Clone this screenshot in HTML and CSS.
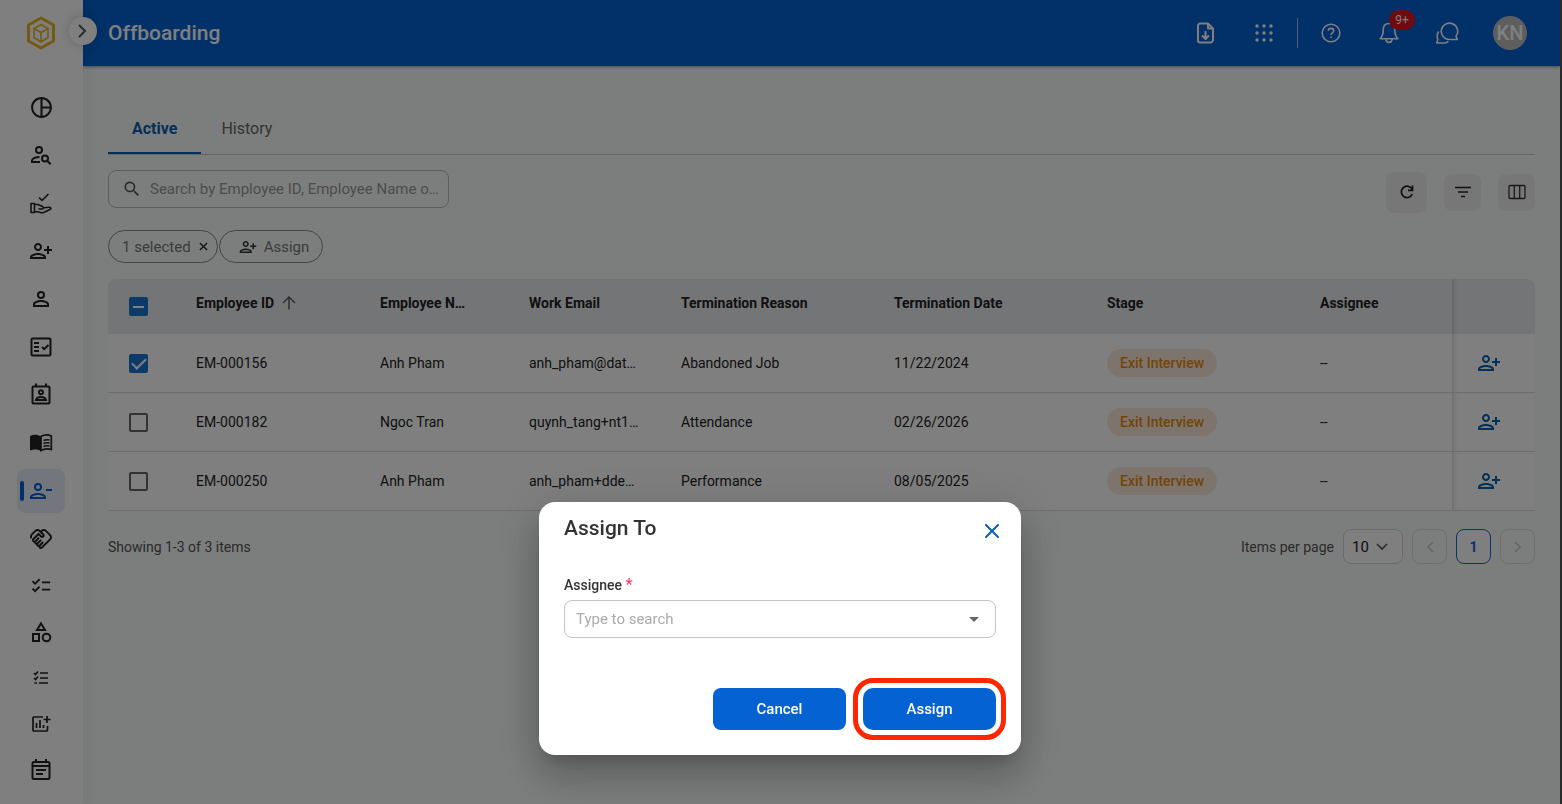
FILE: index.html
```html
<!DOCTYPE html>
<html lang="en">
<head>
<meta charset="utf-8">
<meta name="viewport" content="width=device-width, initial-scale=1">
<title>Offboarding</title>
<link rel="stylesheet" href="styles.css">
</head>
<body>
<svg class="sprite" aria-hidden="true">
  <symbol id="person-add" viewBox="0 0 24 24"><path d="M13 8c0-2.210-1.790-4-4-4S5 5.790 5 8s1.790 4 4 4 4-1.790 4-4zm-2 0c0 1.100-.9 2-2 2s-2-.9-2-2 .9-2 2-2 2 .9 2 2zM1 18v2h16v-2c0-2.660-5.330-4-8-4s-8 1.340-8 4zm2 0c.2-.71 3.300-2 6-2 2.690 0 5.770 1.280 6 2H3zM20 15v-3h3v-2h-3V7h-2v3h-3v2h3v3h2z"/></symbol>
</svg>
<div class="app">
  <aside class="sidebar">
    <a class="logo" href="#" aria-label="Home">
      <svg width="30" height="34" viewBox="0 0 30 34" fill="none" stroke="#e9b520" stroke-linejoin="round"><path stroke-width="3" d="M15 2 27.500 9v16L15 32 2.500 25V9z"/><path stroke-width="1.600" d="M15 8.500 22 12.500v9L15 26l-7-4.500v-9zM8 12.500l7 4 7-4M15 16.500V26"/></svg>
    </a>
    <button class="toggle" aria-label="Expand menu"><svg width="18" height="18" viewBox="0 0 18 18" fill="none" stroke="#555" stroke-width="2"><path d="m5 3 6 6-6 6"/></svg></button>
    <nav class="nav">
      <a href="#" aria-label="Dashboard"><svg width="25" height="25" viewBox="0 0 24 24"><path d="M12 2C6.480 2 2 6.480 2 12s4.480 10 10 10 10-4.480 10-10S17.520 2 12 2zm1 2.070c3.610.45 6.480 3.330 6.930 6.930H13V4.070zM4 12c0-4.060 3.070-7.440 7-7.930v15.870c-3.930-.5-7-3.880-7-7.940zm9 7.930V13h6.930c-.45 3.610-3.320 6.480-6.930 6.930z"/></svg></a>
      <a href="#" aria-label="Find people"><svg width="24" height="24" viewBox="0 0 24 24" fill="none" stroke="#222" stroke-width="2"><circle cx="10" cy="7" r="3"/><path d="M10.500 14C7.500 14 3 15.300 3 17.500V19h8"/><circle cx="16" cy="15.500" r="3"/><path d="m18.200 17.700 3.500 3.500"/></svg></a>
      <a href="#" aria-label="Approvals"><svg width="24" height="24" viewBox="0 0 24 24" fill="none" stroke="#222" stroke-width="1.600" stroke-linejoin="round"><path d="m10 6.500 3 3 6.500-6.500M2 12.500h3.500v9H2zM5.500 13.500h3.500l4.500 2c1.500.7 1 2.500-.5 2.500H9.500m4-1 6-.7c2.500-.3 3 1.500 1.500 2.200L14.500 21.500c-1 .4-2 .3-3 0l-3-.8h-3"/></svg></a>
      <a href="#" aria-label="Onboarding"><svg width="24" height="24"><use href="#person-add"/></svg></a>
      <a href="#" aria-label="Employees"><svg width="24" height="24" viewBox="0 0 24 24"><path fill-rule="evenodd" d="M12 4a4 4 0 1 0 0 8 4 4 0 0 0 0-8zm0 2a2 2 0 1 1 0 4 2 2 0 0 1 0-4zM12 13c-2.670 0-8 1.340-8 4v3h16v-3c0-2.660-5.330-4-8-4zm0 2c2.700 0 5.800 1.290 6 2v1H6v-1c.2-.7 3.300-2 6-2z"/></svg></a>
      <a href="#" aria-label="Checks"><svg width="24" height="24" viewBox="0 0 24 24" fill="none" stroke="#222" stroke-width="2"><rect x="2.500" y="3.500" width="19" height="17" rx="1"/><path d="M5 8h5M5 12h5M5 16h5m3-4 2.200 2.200L19.500 10"/></svg></a>
      <a href="#" aria-label="Contacts"><svg width="24" height="24" viewBox="0 0 24 24" fill="none" stroke="#222" stroke-width="2"><rect x="3.500" y="3.500" width="17" height="17" rx="1"/><path d="M7 .5V4m10-3.500V4"/><circle cx="12" cy="9.300" r="2"/><path d="M7 17c.6-2.300 3-3 5-3s4.400.7 5 3z"/></svg></a>
      <a href="#" aria-label="Handbook"><svg width="24" height="24" viewBox="0 0 24 24"><path d="M1 5c3.500-1.800 8-1.500 11 .5V20c-3-2-7.500-2-11-.5z"/><path fill="none" stroke="#222" stroke-width="1.700" d="M12 5.500C15 3.700 19 3.500 22.300 5v13.500c-3.500-1-7.300-.8-10.300 1zM14.500 9.500c2-.8 4-.9 6-.5m-6 3.500c2-.8 4-.9 6-.5m-6 3.500c2-.8 4-.9 6-.5"/></svg></a>
      <a href="#" class="current" aria-label="Offboarding" aria-current="page"><svg width="24" height="24" viewBox="0 0 24 24"><path fill-rule="evenodd" d="M9 4a4 4 0 1 0 0 8 4 4 0 0 0 0-8zm0 2a2 2 0 1 1 0 4 2 2 0 0 1 0-4zM1 18v2h16v-2c0-2.660-5.330-4-8-4s-8 1.340-8 4zm2 0c.2-.71 3.300-2 6-2s5.770 1.280 6 2H3zM17 10h6v2h-6z"/></svg></a>
      <a href="#" aria-label="Relations"><svg width="24" height="24" viewBox="0 0 24 24"><path d="M12.220 19.850c-.18.18-.5.21-.71 0-.18-.18-.21-.5 0-.71l3.390-3.390-1.410-1.410-3.390 3.390c-.19.2-.51.19-.71 0-.21-.21-.18-.53 0-.71l3.390-3.390-1.410-1.410-3.390 3.390c-.18.18-.5.21-.71 0-.19-.19-.19-.51 0-.71l3.390-3.390-1.420-1.410-3.390 3.390c-.18.18-.5.21-.71 0-.19-.2-.19-.51 0-.71L9.520 8.400l1.870 1.860c.95.95 2.590.94 3.540 0 .98-.98.98-2.560 0-3.540l-1.860-1.860.28-.28c.78-.78 2.050-.78 2.830 0l4.240 4.240c.78.78.78 2.050 0 2.830l-8.200 8.200zm9.610-6.780c1.560-1.560 1.560-4.090 0-5.660l-4.240-4.240c-1.560-1.560-4.090-1.560-5.660 0l-.28.28-.28-.28c-1.560-1.560-4.090-1.560-5.660 0L2.170 6.710C.75 8.130.62 10.340 1.770 11.900l1.450-1.450c-.39-.75-.26-1.700.37-2.330l3.540-3.540c.78-.78 2.050-.78 2.830 0l3.560 3.560c.18.18.21.5 0 .71-.21.21-.53.18-.71 0L9.520 5.570l-5.800 5.790c-.98.97-.98 2.560 0 3.540.39.39.89.63 1.420.7.070.52.3 1.020.7 1.420.4.4.9.63 1.420.7.070.52.3 1.020.7 1.420.4.4.9.63 1.420.7.070.54.31 1.030.7 1.420.47.47 1.100.73 1.770.73s1.300-.26 1.770-.73l8.210-8.190z"/></svg></a>
      <a href="#" class="compact" aria-label="Checklist"><svg width="22" height="22" viewBox="0 0 24 24"><path d="M22 7h-9v2h9V7zm0 8h-9v2h9v-2zM5.540 11 2 7.460l1.410-1.410 2.120 2.120 4.240-4.240 1.410 1.410L5.540 11zm0 8L2 15.460l1.410-1.410 2.120 2.120 4.240-4.240 1.410 1.410L5.540 19z"/></svg></a>
      <a href="#" class="compact" aria-label="Categories"><svg width="24" height="24" viewBox="0 0 24 24" fill="none" stroke="#222" stroke-width="2"><path d="M12 3.500 16 10H8zM4 14h6v7H4z"/><circle cx="17.500" cy="17.500" r="3.800"/></svg></a>
      <a href="#" class="compact" aria-label="Tasks"><svg width="16" height="16" viewBox="0 0 16 16" fill="none" stroke="#222" stroke-width="1.700"><path d="M7 3h8M7 8h8M6 13h9M1 3l1.500 1.500L5 1.500M1 8l1.500 1.500L5 6.500M1.500 13h2.500"/></svg></a>
      <a href="#" class="compact" aria-label="Reports"><svg width="20" height="20" viewBox="0 0 20 20" fill="none" stroke="#222" stroke-width="1.700"><path d="M12 3H3a1 1 0 0 0-1 1v12a1 1 0 0 0 1 1h12.500a1 1 0 0 0 1-1v-4M16 2v7m-3.500-3.500h7M5.500 9v5M9 6v8m3.500-3v3"/></svg></a>
      <a href="#" class="compact" aria-label="Calendar"><svg width="24" height="24" viewBox="0 0 24 24" fill="none" stroke="#222" stroke-width="2"><rect x="3.500" y="4" width="17" height="17" rx="1.500"/><path d="M7 1v3m10-3v3M3.500 8h17M7 12h10M7 16h7"/></svg></a>
    </nav>
  </aside>
  <div class="page">
    <header class="topbar">
      <h1>Offboarding</h1>
      <div class="tools">
        <div class="tool-group">
          <button aria-label="Download file"><svg width="24" height="24" viewBox="0 0 24 24" fill="none" stroke="#fff" stroke-width="2" stroke-linejoin="round"><path d="M14 2.500H6a2 2 0 0 0-2 2v15a2 2 0 0 0 2 2h10a3 3 0 0 0 3-2v-12zM14 2.500v5h5M11.500 10v8m-3.500-3.500 3.500 3.500 3.500-3.500"/></svg></button>
          <button aria-label="Apps"><svg width="24" height="24" viewBox="0 0 24 24" fill="#fff"><circle cx="5" cy="5" r="1.700"/><circle cx="12" cy="5" r="1.700"/><circle cx="19" cy="5" r="1.700"/><circle cx="5" cy="12" r="1.700"/><circle cx="12" cy="12" r="1.700"/><circle cx="19" cy="12" r="1.700"/><circle cx="5" cy="19" r="1.700"/><circle cx="12" cy="19" r="1.700"/><circle cx="19" cy="19" r="1.700"/></svg></button>
        </div>
        <div class="tool-group divided">
          <button aria-label="Help"><svg width="24" height="24" viewBox="0 0 24 24" fill="none" stroke="#fff" stroke-width="1.600"><circle cx="12" cy="12" r="8.800"/><path d="M9.300 9.800c0-3.300 5.400-3.300 5.400 0 0 2-2.700 2-2.700 4.200m0 1.500v1.500"/></svg></button>
          <button class="bell" aria-label="Notifications, 9+"><svg width="24" height="24" viewBox="0 0 24 24" fill="none" stroke="#fff" stroke-width="1.600" stroke-linejoin="round"><path d="M12 2.500c-4 0-5.800 3-5.800 6.500 0 4.500-1 6.500-3 8.700h17.600c-2-2.200-3-4.200-3-8.700 0-3.500-1.800-6.500-5.800-6.500zM9 18c0 4.500 6 4.500 6 0"/></svg><span class="badge">9+</span></button>
          <button aria-label="Messages"><svg width="24" height="24" viewBox="0 0 24 24" fill="none" stroke="#fff" stroke-width="1.600" stroke-linejoin="round"><path d="M22.300 18.500h-8.300a8.200 8.200 0 1 1 7-3.200zM3.700 10.500c-2 3-2 5.500-.8 8L1.800 22h8c1.500 0 2.700-.7 3.500-1.700"/></svg></button>
          <button class="avatar" aria-label="Account KN">KN</button>
        </div>
      </div>
    </header>
    <main class="content">
      <div class="tabs" role="tablist">
        <button class="tab selected" role="tab" aria-selected="true">Active</button>
        <button class="tab" role="tab" aria-selected="false">History</button>
      </div>
      <div class="toolbar">
        <label class="search">
          <svg width="20" height="20" viewBox="0 0 24 24" fill="#555"><path d="M15.500 14h-.79l-.28-.27A6.500 6.500 0 1 0 13.730 14.430l.27.28v.79l5 5L20.500 19zM9.500 14a4.500 4.500 0 1 1 0-9 4.500 4.500 0 0 1 0 9z"/></svg>
          <input type="text" aria-label="Search" placeholder="Search by Employee ID, Employee Name o…">
        </label>
        <div class="actions">
          <button class="large" aria-label="Refresh"><svg width="16" height="16" viewBox="0 0 16 16" fill="none" stroke="#222" stroke-width="1.800"><path d="M13.300 10a5.700 5.700 0 1 1-.8-5.700L14 6M13.500 1.500v4.800H9"/></svg></button>
          <button aria-label="Filter"><svg width="16" height="12" viewBox="0 0 16 12" stroke="#222" stroke-width="1.600"><path d="M0 1.500h16M3 6h10M6 10.500h4"/></svg></button>
          <button aria-label="Columns"><svg width="18" height="16" viewBox="0 0 18 16" fill="none" stroke="#333" stroke-width="1.300"><rect x="1" y="1.500" width="16" height="13" rx="1"/><path d="M6.300 1.500v13m5.400-13v13"/></svg></button>
        </div>
      </div>
      <div class="chips">
        <button class="chip selection">1 selected <svg width="9" height="9" viewBox="0 0 10 10" stroke="#222" stroke-width="1.500"><path d="m1 1 8 8m0-8-8 8"/></svg></button>
        <button class="chip assign"><svg width="18" height="18" fill="#333"><use href="#person-add"/></svg>Assign</button>
      </div>
      <div class="table-wrap">
        <table>
          <colgroup><col class="c-check"><col class="c-id"><col class="c-name"><col class="c-email"><col class="c-wide"><col class="c-wide"><col class="c-wide"><col class="c-name"><col class="c-action"></colgroup>
          <thead>
            <tr><th class="check"><input class="box partial" type="checkbox" aria-label="Select all"></th><th><span class="sorted">Employee ID <svg width="14" height="14" viewBox="0 0 14 14" fill="none" stroke="#555" stroke-width="1.400"><path d="M7 13.500V1.500M1 7l6-6 6 6"/></svg></span></th><th>Employee N…</th><th>Work Email</th><th>Termination Reason</th><th>Termination Date</th><th>Stage</th><th>Assignee</th><th class="pinned"></th></tr>
          </thead>
          <tbody>
            <tr><td class="check"><input class="box" type="checkbox" checked aria-label="Select EM-000156"></td><td>EM-000156</td><td>Anh Pham</td><td>anh_pham@dat…</td><td>Abandoned Job</td><td>11/22/2024</td><td><span class="stage">Exit Interview</span></td><td>--</td><td class="pinned"><button aria-label="Assign EM-000156"><svg width="24" height="24"><use href="#person-add"/></svg></button></td></tr>
            <tr><td class="check"><input class="box" type="checkbox" aria-label="Select EM-000182"></td><td>EM-000182</td><td>Ngoc Tran</td><td>quynh_tang+nt1…</td><td>Attendance</td><td>02/26/2026</td><td><span class="stage">Exit Interview</span></td><td>--</td><td class="pinned"><button aria-label="Assign EM-000182"><svg width="24" height="24"><use href="#person-add"/></svg></button></td></tr>
            <tr><td class="check"><input class="box" type="checkbox" aria-label="Select EM-000250"></td><td>EM-000250</td><td>Anh Pham</td><td>anh_pham+dde…</td><td>Performance</td><td>08/05/2025</td><td><span class="stage">Exit Interview</span></td><td>--</td><td class="pinned"><button aria-label="Assign EM-000250"><svg width="24" height="24"><use href="#person-add"/></svg></button></td></tr>
          </tbody>
        </table>
      </div>
      <div class="pager">
        <span class="summary">Showing 1-3 of 3 items</span>
        <label class="size-label" for="page-size">Items per page</label>
        <span class="size"><select id="page-size"><option>10</option></select><svg width="12" height="8" viewBox="0 0 12 8" fill="none" stroke="#555" stroke-width="1.600"><path d="m1 1 5 5 5-5"/></svg></span>
        <button class="step" disabled aria-label="Previous page"><svg width="8" height="12" viewBox="0 0 8 12" fill="none" stroke="#c8caca" stroke-width="1.500"><path d="M7 1 2 6l5 5"/></svg></button>
        <button class="step active">1</button>
        <button class="step" disabled aria-label="Next page"><svg width="8" height="12" viewBox="0 0 8 12" fill="none" stroke="#c8caca" stroke-width="1.500"><path d="m1 1 5 5-5 5"/></svg></button>
      </div>
    </main>
  </div>
</div>
<div class="backdrop">
  <section class="modal" role="dialog" aria-modal="true" aria-labelledby="modal-title">
    <div class="modal-head">
      <h2 id="modal-title">Assign To</h2>
      <button class="close" aria-label="Close"><svg width="14" height="14" viewBox="0 0 14 14" stroke="#0560b0" stroke-width="2" stroke-linecap="round"><path d="m1 1 12 12m0-12L1 13"/></svg></button>
    </div>
    <label class="field-label" for="assignee">Assignee <span class="required">*</span></label>
    <div class="combo">
      <input id="assignee" type="text" role="combobox" aria-expanded="false" placeholder="Type to search">
      <svg width="10" height="5" viewBox="0 0 10 5" fill="#666"><path d="M0 0h10L5 5z"/></svg>
    </div>
    <div class="modal-actions">
      <button class="primary">Cancel</button>
      <button class="primary highlighted">Assign</button>
    </div>
  </section>
</div>
</body>
</html>
```
FILE: styles.css
```css
* { box-sizing: border-box; }
body {
  margin: 0;
  border-right: 2px solid #555;
  background: #f8fcfa;
  color: #222;
  font: 14px/20px Roboto, sans-serif;
}
button, input, select { font: inherit; color: inherit; }
button { padding: 0; border: 0; background: none; cursor: pointer; }
svg { display: block; flex: none; }
.sprite { position: absolute; width: 0; height: 0; }

.app { display: flex; min-height: 100vh; }

/* Sidebar */
.sidebar {
  position: relative;
  flex: none;
  width: 83px;
  padding-right: 1px;
  background: #fff;
  box-shadow: 0 0 16px rgba(0, 0, 0, .08);
}
.logo { display: flex; justify-content: center; padding: 16px 0; height: 83px; }
.toggle {
  position: absolute;
  top: 17px;
  right: -14px;
  z-index: 1;
  display: grid;
  place-items: center;
  width: 28px;
  height: 28px;
  border-radius: 50%;
  background: #fff;
  box-shadow: 0 0 12px rgba(0, 0, 0, .2);
}
.nav { display: flex; flex-direction: column; align-items: center; }
.nav a {
  position: relative;
  display: grid;
  place-items: center;
  width: 48px;
  height: 48px;
  fill: #222;
}
.nav .compact { height: 46px; }
.nav .current { fill: #0562d2; }
.nav .current::before {
  content: "";
  position: absolute;
  inset: 2px 0;
  z-index: 0;
  border-radius: 8px;
  background: #e6effb;
}
.nav .current::after {
  content: "";
  position: absolute;
  left: 3px;
  top: 14px;
  width: 4px;
  height: 20px;
  border-radius: 2px;
  background: #0562d2;
}
.nav .current svg { position: relative; }

/* Top bar */
.page { flex: 1; min-width: 0; }
.topbar {
  display: flex;
  align-items: center;
  justify-content: space-between;
  height: 66px;
  padding: 0 33px 0 25px;
  background: #0562d2;
  box-shadow: 0 1px 3px rgba(0, 0, 0, .4);
  color: #fff;
}
.topbar h1 { margin: 0; font-size: 21px; font-weight: 500; line-height: 28px; }
.tools { display: flex; align-items: center; gap: 21px; }
.tool-group { display: flex; align-items: center; gap: 34px; }
.divided::before { content: ""; width: 1px; height: 30px; margin-right: -13px; background: #9dbde8; }
.bell { position: relative; }
.badge {
  position: absolute;
  left: 12px;
  top: -11px;
  width: 26px;
  border-radius: 10px;
  background: #e0141c;
  font-size: 12px;
  line-height: 20px;
}
.avatar {
  width: 34px;
  height: 34px;
  border-radius: 50%;
  background: #bdbdbd;
  font-size: 20px;
  font-weight: 500;
}

/* Content */
.content { padding: 40px 25px 24px; }
.tabs { display: flex; border-bottom: 1px solid #ccc; }
.tab {
  height: 48px;
  padding: 0 20px;
  border-bottom: 2px solid transparent;
  color: #666;
  font-size: 16px;
}
.tab.selected { padding: 0 24px; border-color: #0560b0; color: #0560b0; font-weight: 700; }
.toolbar { display: flex; justify-content: space-between; margin-top: 15px; }
.search {
  display: flex;
  align-items: center;
  gap: 8px;
  width: 341px;
  height: 38px;
  padding: 0 4px 0 13px;
  border: 1px solid #b8bcba;
  border-radius: 8px;
}
.search input { flex: 1; min-width: 0; padding: 0; border: 0; outline: 0; background: none; font-size: 15px; }
.search input::placeholder { color: #999; opacity: 1; }
.actions { display: flex; align-items: center; gap: 17px; height: 44px; }
.actions button {
  display: grid;
  place-items: center;
  width: 37px;
  height: 37px;
  border-radius: 8px;
  background: #efefef;
}
.actions .large { width: 41px; height: 41px; }
.chips { display: flex; gap: 1px; margin-top: 16px; }
.chip {
  display: flex;
  align-items: center;
  height: 33px;
  border: 1px solid #888;
  border-radius: 17px;
  color: #777;
  font-size: 15px;
}
.selection { gap: 8px; padding: 0 9px 0 13px; }
.assign { gap: 7px; padding: 0 13px 0 19px; }

/* Table */
.table-wrap { margin-top: 16px; overflow: hidden; border-radius: 8px 8px 0 0; }
table { width: 100%; border-collapse: separate; border-spacing: 0; table-layout: fixed; }
.c-check { width: 71px; }
.c-id { width: 184px; }
.c-name { width: 149px; }
.c-email { width: 152px; }
.c-wide { width: 213px; }
.c-action { width: 83px; }
th, td { padding: 0 0 0 17px; text-align: left; white-space: nowrap; }
th { height: 55px; padding-bottom: 8px; background: #e9ebee; font-weight: 700; }
td { height: 59px; border-bottom: 1px solid #dcdcdc; background: #fff; }
.check { padding: 0 0 0 21px; }
.sorted { display: flex; align-items: center; gap: 8px; }
.box {
  appearance: none;
  display: block;
  width: 19px;
  height: 19px;
  margin: 0;
  border: 2px solid #666;
  border-radius: 2px;
}
.box:checked, .partial { border: 0; background: #1976d2; }
.box:checked::before {
  content: "";
  display: block;
  width: 6px;
  height: 12px;
  margin: 1px auto 0;
  border: solid #fff;
  border-width: 0 2px 2px 0;
  transform: rotate(45deg);
}
.partial { display: grid; place-items: center; }
.partial::before { content: ""; width: 11px; height: 2px; background: #fff; }
.stage {
  display: inline-block;
  padding: 4px 13px;
  border-radius: 14px;
  background: #fbeadb;
  color: #e8890c;
  font-weight: 500;
}
.pinned { padding: 0 0 0 25px; box-shadow: inset 5px 0 5px -4px rgba(0, 0, 0, .2); }
.pinned button { display: block; fill: #0560b0; }

/* Pagination */
.pager { display: flex; align-items: center; gap: 9px; margin-top: 18px; }
.summary { flex: 1; color: #555; }
.size-label { color: #555; }
.size {
  display: flex;
  align-items: center;
  width: 60px;
  height: 35px;
  padding: 0 14px 0 8px;
  border: 1px solid #d2d4d4;
  border-radius: 8px;
  background: #fff;
}
.size select { flex: 1; min-width: 0; padding: 0; border: 0; appearance: none; background: none; font-size: 15px; }
.step {
  display: grid;
  place-items: center;
  width: 35px;
  height: 35px;
  border: 1px solid #dcdfde;
  border-radius: 8px;
}
.step.active { border-color: #1565d8; background: #fff; color: #1565d8; font-weight: 700; }

/* Dialog */
.backdrop {
  position: fixed;
  inset: 0;
  z-index: 2;
  display: flex;
  align-items: flex-end;
  justify-content: center;
  padding: 0 2px 49px 0;
  background: rgba(0, 0, 0, .5);
}
.modal {
  width: 482px;
  padding: 12px 25px 25px;
  border-radius: 16px;
  background: #fff;
  box-shadow: 0 11px 15px -7px rgba(0, 0, 0, .2), 0 24px 38px 3px rgba(0, 0, 0, .14), 0 9px 46px 8px rgba(0, 0, 0, .12);
}
.modal-head { display: flex; justify-content: space-between; }
.modal-head h2 { margin: 0; color: #333; font-size: 21px; font-weight: 500; line-height: 28px; }
.close { display: grid; place-items: center; width: 28px; height: 34px; margin-right: -10px; }
.field-label { display: block; margin-top: 27px; color: #333; font-weight: 500; }
.required { color: #ff3b5c; font-size: 16px; }
.combo {
  display: flex;
  align-items: center;
  height: 38px;
  margin-top: 5px;
  padding: 0 16px 0 11px;
  border: 1px solid #c4c4c4;
  border-radius: 8px;
}
.combo input { flex: 1; min-width: 0; padding: 0; border: 0; outline: 0; background: none; font-size: 15px; }
.combo input::placeholder { color: #aaa; opacity: 1; }
.modal-actions { display: flex; justify-content: flex-end; gap: 17px; margin-top: 50px; }
.primary {
  width: 133px;
  height: 42px;
  border-radius: 8px;
  background: #0562d2;
  color: #fff;
  font-size: 15px;
  font-weight: 500;
}
.highlighted { outline: 5px solid #ff2600; outline-offset: 5px; border-radius: 10px; }
```
